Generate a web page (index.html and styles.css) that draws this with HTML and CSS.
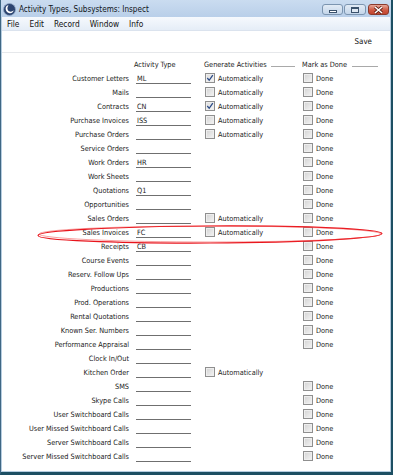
FILE: index.html
```html
<!DOCTYPE html>
<html>
<head>
<meta charset="utf-8">
<link rel="stylesheet" href="styles.css">
</head>
<body>
<div class="window">
  <div class="titlebar">
    <svg class="appicon" width="13" height="13" viewBox="0 0 13 13">
      <circle cx="6.5" cy="6.5" r="6" fill="#2c4470"/>
      <circle cx="6.5" cy="6.5" r="6" fill="none" stroke="#8fa6c4" stroke-width="0.8"/>
      <path d="M4 2.6 C1.6 4.6 2.4 9.6 6.6 10.2 C9.2 10.5 10.6 8.6 10.6 7.2 C9.4 9 6.2 9.2 5 7.2 C4 5.6 4.4 3.8 5.6 2.6 Z" fill="#ffffff"/>
    </svg>
    <span class="title">Activity Types, Subsystems: Inspect</span>
    <div class="winbtns">
      <div class="wbtn min"><span class="minbar"></span></div>
      <div class="wbtn max"><span class="maxbox"></span></div>
      <div class="wbtn close">
        <svg width="11" height="8" viewBox="0 0 11 8"><path d="M2 1 L9 7 M9 1 L2 7" stroke="#5a1a10" stroke-width="3"/><path d="M2 1 L9 7 M9 1 L2 7" stroke="#ffffff" stroke-width="1.6"/></svg>
      </div>
    </div>
  </div>
  <div class="client">
    <div class="menubar">
      <span>File</span><span>Edit</span><span>Record</span><span>Window</span><span>Info</span>
    </div>
    <div class="toolbar"><span class="save">Save</span></div>
    <div class="form">
      <div class="hdr">
        <div class="hspacer"></div>
        <div class="hat">Activity Type</div>
        <div class="hgen"><span>Generate Activities</span><i></i></div>
        <div class="hdone"><span>Mark as Done</span><i></i></div>
      </div>

      <div class="row"><div class="lbl">Customer Letters</div><div class="fld">ML</div><div class="gen"><span class="cb on"><svg width="8" height="8" viewBox="0 0 8 8"><path d="M1.3 4 L3.2 6.3 L6.8 1.2" fill="none" stroke="#2b4a86" stroke-width="1.3"/></svg></span>Automatically</div><div class="done"><span class="cb"></span>Done</div></div>
      <div class="row"><div class="lbl">Mails</div><div class="fld"></div><div class="gen"><span class="cb"></span>Automatically</div><div class="done"><span class="cb"></span>Done</div></div>
      <div class="row"><div class="lbl">Contracts</div><div class="fld">CN</div><div class="gen"><span class="cb on"><svg width="8" height="8" viewBox="0 0 8 8"><path d="M1.3 4 L3.2 6.3 L6.8 1.2" fill="none" stroke="#2b4a86" stroke-width="1.3"/></svg></span>Automatically</div><div class="done"><span class="cb"></span>Done</div></div>
      <div class="row"><div class="lbl">Purchase Invoices</div><div class="fld">ISS</div><div class="gen"><span class="cb"></span>Automatically</div><div class="done"><span class="cb"></span>Done</div></div>
      <div class="row"><div class="lbl">Purchase Orders</div><div class="fld"></div><div class="gen"><span class="cb"></span>Automatically</div><div class="done"><span class="cb"></span>Done</div></div>
      <div class="row"><div class="lbl">Service Orders</div><div class="fld"></div><div class="gen"></div><div class="done"><span class="cb"></span>Done</div></div>
      <div class="row"><div class="lbl">Work Orders</div><div class="fld">HR</div><div class="gen"></div><div class="done"><span class="cb"></span>Done</div></div>
      <div class="row"><div class="lbl">Work Sheets</div><div class="fld"></div><div class="gen"></div><div class="done"><span class="cb"></span>Done</div></div>
      <div class="row"><div class="lbl">Quotations</div><div class="fld">Q1</div><div class="gen"></div><div class="done"><span class="cb"></span>Done</div></div>
      <div class="row"><div class="lbl">Opportunities</div><div class="fld"></div><div class="gen"></div><div class="done"><span class="cb"></span>Done</div></div>
      <div class="row"><div class="lbl">Sales Orders</div><div class="fld"></div><div class="gen"><span class="cb"></span>Automatically</div><div class="done"><span class="cb"></span>Done</div></div>
      <div class="row"><div class="lbl">Sales Invoices</div><div class="fld">FC</div><div class="gen"><span class="cb"></span>Automatically</div><div class="done"><span class="cb"></span>Done</div></div>
      <div class="row"><div class="lbl">Receipts</div><div class="fld">CB</div><div class="gen"></div><div class="done"><span class="cb"></span>Done</div></div>
      <div class="row"><div class="lbl">Course Events</div><div class="fld"></div><div class="gen"></div><div class="done"><span class="cb"></span>Done</div></div>
      <div class="row"><div class="lbl">Reserv. Follow Ups</div><div class="fld"></div><div class="gen"></div><div class="done"><span class="cb"></span>Done</div></div>
      <div class="row"><div class="lbl">Productions</div><div class="fld"></div><div class="gen"></div><div class="done"><span class="cb"></span>Done</div></div>
      <div class="row"><div class="lbl">Prod. Operations</div><div class="fld"></div><div class="gen"></div><div class="done"><span class="cb"></span>Done</div></div>
      <div class="row"><div class="lbl">Rental Quotations</div><div class="fld"></div><div class="gen"></div><div class="done"><span class="cb"></span>Done</div></div>
      <div class="row"><div class="lbl">Known Ser. Numbers</div><div class="fld"></div><div class="gen"></div><div class="done"><span class="cb"></span>Done</div></div>
      <div class="row"><div class="lbl">Performance Appraisal</div><div class="fld"></div><div class="gen"></div><div class="done"><span class="cb"></span>Done</div></div>
      <div class="row"><div class="lbl">Clock In/Out</div><div class="fld"></div><div class="gen"></div><div class="done"></div></div>
      <div class="row"><div class="lbl">Kitchen Order</div><div class="fld"></div><div class="gen"><span class="cb"></span>Automatically</div><div class="done"></div></div>
      <div class="row"><div class="lbl">SMS</div><div class="fld"></div><div class="gen"></div><div class="done"><span class="cb"></span>Done</div></div>
      <div class="row"><div class="lbl">Skype Calls</div><div class="fld"></div><div class="gen"></div><div class="done"><span class="cb"></span>Done</div></div>
      <div class="row"><div class="lbl">User Switchboard Calls</div><div class="fld"></div><div class="gen"></div><div class="done"><span class="cb"></span>Done</div></div>
      <div class="row"><div class="lbl">User Missed Switchboard Calls</div><div class="fld"></div><div class="gen"></div><div class="done"><span class="cb"></span>Done</div></div>
      <div class="row"><div class="lbl">Server Switchboard Calls</div><div class="fld"></div><div class="gen"></div><div class="done"><span class="cb"></span>Done</div></div>
      <div class="row"><div class="lbl">Server Missed Switchboard Calls</div><div class="fld"></div><div class="gen"></div><div class="done"><span class="cb"></span>Done</div></div>
    </div>
  </div>
  <svg class="ring" width="393" height="475" viewBox="0 0 393 475">
    <ellipse cx="210" cy="234.5" rx="172" ry="8.5" fill="none" stroke="#e8141c" stroke-width="1.2" transform="rotate(-0.3 210 234.5)"/>
    <ellipse cx="210" cy="234" rx="171" ry="8" fill="none" stroke="#f04040" stroke-width="0.7" stroke-opacity="0.7"/>
  </svg>
</div>
</body>
</html>
```
FILE: styles.css
```css
* { box-sizing: border-box; }
html, body { margin: 0; padding: 0; background: #ffffff; }
body { width: 393px; height: 475px; overflow: hidden; }

.window {
  position: relative;
  width: 393px;
  height: 475px;
  display: flex;
  flex-direction: column;
  border-left: 1px solid #3f6784;
  border-right: 2px solid #1d4f63;
  border-bottom: 3px solid #1d4f63;
  font-family: "DejaVu Sans Condensed", "DejaVu Sans", sans-serif;
  font-stretch: condensed;
  color: #1a1a1a;
}

.titlebar {
  height: 17px;
  display: flex;
  align-items: center;
  background: linear-gradient(#cadcf0, #b9cfe9);
  padding: 0 2px 0 2px;
  flex: none;
}
.appicon { flex: none; margin-top: 1px; }
.title {
  margin-left: 3px;
  font-size: 8.1px;
  color: #101418;
  flex: 1;
  margin-top: 1px;
}
.winbtns { display: flex; gap: 1px; align-items: flex-start; height: 17px; padding-top: 4px; }
.wbtn {
  width: 22px;
  height: 11px;
  border: 1px solid #7c95b0;
  border-radius: 3px;
  background: linear-gradient(#e2ebf5, #c4d6ea);
  display: flex;
  align-items: center;
  justify-content: center;
}
.wbtn.min { width: 21px; }
.wbtn.close {
  width: 21px;
  margin-left: 1px;
  border-color: #8a3a2c;
  background: linear-gradient(#e6a89a, #cf5a44 55%, #c2452f);
}
.minbar {
  width: 8px; height: 3px;
  margin-top: 3px;
  background: #ffffff;
  border: 1px solid #3b526c;
}
.maxbox {
  width: 8px; height: 6px;
  border: 1px solid #3b526c;
  border-top-width: 2px;
  background: #dfe8f2;
}

.client {
  flex: 1;
  display: flex;
  flex-direction: column;
  border-left: 1px solid #b6cde0;
  border-right: 1px solid #b6cde0;
  border-bottom: 1px solid #b6cde0;
  background: #ffffff;
}

.menubar {
  height: 14px;
  display: flex;
  align-items: center;
  background: linear-gradient(#f6f9fd, #e5edf7);
  border-bottom: 1px solid #dbe3ee;
  font-size: 8.3px;
  color: #111;
  padding-left: 5px;
  flex: none;
}
.menubar span { margin-right: 10px; }

.toolbar {
  height: 22px;
  flex: none;
  display: flex;
  align-items: center;
  justify-content: flex-end;
  padding-right: 18px;
  border-bottom: 1px solid #e6e8eb;
}
.save { font-size: 7.9px; color: #111; }

.form {
  padding-top: 4px;
  font-size: 7.3px;
}
.hdr, .row {
  display: flex;
  align-items: center;
  height: 14px;
}
.hspacer { width: 132px; flex: none; }
.hat { width: 70px; flex: none; }
.hgen { width: 98px; flex: none; display: flex; align-items: center; }
.hdone { width: 77px; flex: none; display: flex; align-items: center; }
.hgen i, .hdone i {
  flex: 1;
  height: 1px;
  background: #a9a9a9;
  margin-top: 5px;
}
.hgen i { margin-left: 4px; margin-right: 7px; }
.hdone i { margin-left: 5px; margin-right: 1px; }

.lbl { width: 127px; flex: none; text-align: right; white-space: nowrap; }
.fld {
  width: 55px;
  margin-left: 7px;
  flex: none;
  height: 10px;
  line-height: 9px;
  border-bottom: 1px solid #6f6f6f;
  padding-left: 1px;
  margin-top: 1px;
}
.gen { width: 98px; margin-left: 14px; flex: none; display: flex; align-items: center; }
.done { flex: none; display: flex; align-items: center; }

.cb {
  width: 10px;
  height: 10px;
  flex: none;
  margin-right: 3px;
  border: 1px solid #8f8f8f;
  background: linear-gradient(135deg, #d2d2d2, #f4f4f4);
  box-shadow: inset 0 0 0 1px #eeeeee;
  display: flex;
  align-items: center;
  justify-content: center;
}
.cb.on { background: linear-gradient(135deg, #dcdcdc, #f6f6f6); }

.ring {
  position: absolute;
  left: -1px;
  top: 0;
  pointer-events: none;
}
```
